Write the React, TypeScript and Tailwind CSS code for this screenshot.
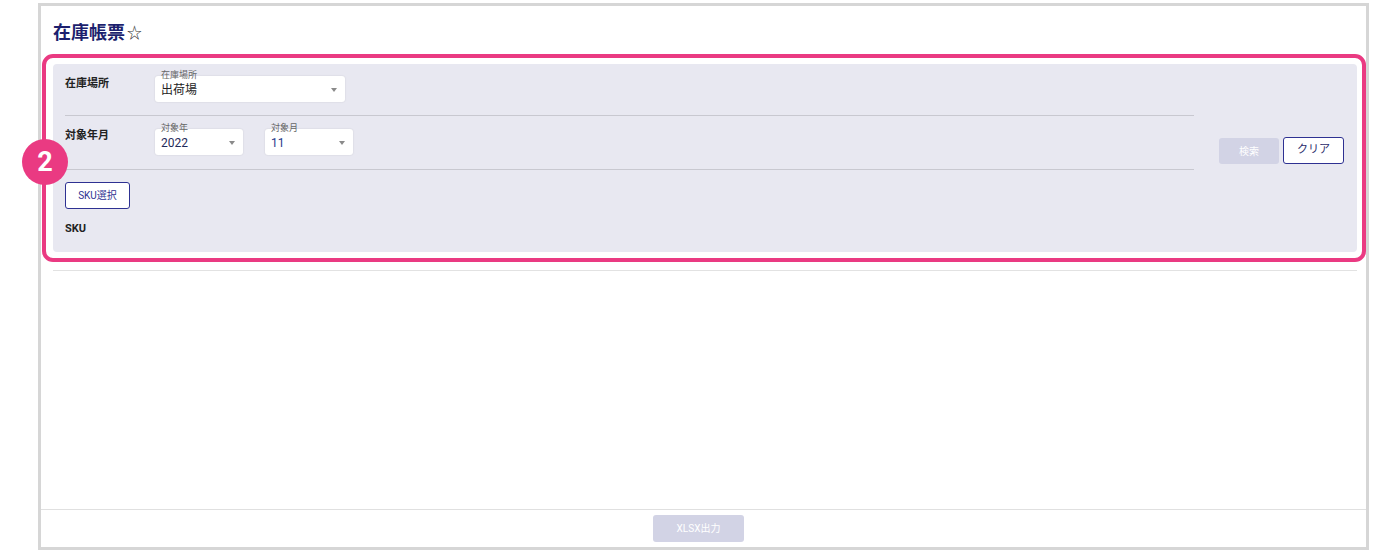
import React from "react";

const font = { fontFamily: "Roboto, 'Noto Sans CJK JP', 'Noto Sans', sans-serif" };

function Select({ label, value, width, valueClass }: { label: string; value: string; width: string; valueClass?: string }) {
  return (
    <div className={`relative h-[26px] ${width} rounded-[3px] bg-white shadow-[0_0_2px_rgba(0,0,0,0.12)]`}>
      <span className="absolute left-[6px] top-[-6px] text-[9px] leading-[11px] text-[#666]">{label}</span>
      <span className={`absolute left-[6px] top-[7px] text-[12px] leading-[14px] ${valueClass ?? "text-[#222]"}`}>{value}</span>
      <span className="absolute right-[8px] top-[12px] h-0 w-0 border-x-[3.5px] border-t-[4px] border-x-transparent border-t-[#8a8a8a]" />
    </div>
  );
}

export default function App() {
  return (
    <div className="h-[554px] w-[1375px] bg-white" style={font}>
      <div className="ml-[38px] mt-[3px] flex h-[547px] w-[1331px] flex-col border-[3px] border-[#d6d6d6] bg-white">
        <div className="flex items-center pl-[12px] pt-[15px] leading-[24px]">
          <span className="text-[18px] font-bold text-[#1c1f6e]">在庫帳票</span>
          <span className="ml-[2px] text-[15px] text-[#333]">☆</span>
        </div>

        <div className="relative ml-[12px] mr-[9px] mt-[19px] h-[188px] rounded-[4px] bg-[#e8e8f1]">
          <div className="flex h-full">
            <div className="w-[1141px] pl-[12px]">
              <div className="flex h-[52px] items-start border-b border-[#c8c8d0] pt-[12px]">
                <div className="w-[90px] pt-[1px] text-[11px] font-bold leading-[14px] text-[#222]">在庫場所</div>
                <Select label="在庫場所" value="出荷場" width="w-[190px]" />
              </div>
              <div className="flex h-[54px] items-start border-b border-[#c8c8d0] pt-[13px]">
                <div className="w-[90px] pt-[0px] text-[11px] font-bold leading-[14px] text-[#222]">対象年月</div>
                <Select label="対象年" value="2022" width="w-[88px]" valueClass="text-[#1f2a5a]" />
                <div className="w-[22px]" />
                <Select label="対象月" value="11" width="w-[88px]" valueClass="text-[#1f3a8a]" />
              </div>
              <div className="pt-[12px]">
                <button className="h-[27px] w-[65px] rounded-[3px] border border-[#2e3192] bg-white text-[10px] text-[#2e3192]">
                  SKU選択
                </button>
                <div className="pt-[13px] text-[11px] font-bold leading-[14px] text-[#222]">SKU</div>
              </div>
            </div>
            <div className="flex items-start gap-[4px] pl-[25px] pt-[73px]">
              <button className="mt-[1px] h-[26px] w-[60px] rounded-[3px] bg-[#d2d3e5] text-[10px] text-white">検索</button>
              <button className="h-[27px] w-[61px] rounded-[3px] border border-[#2e3192] bg-white text-[11px] text-[#2b2b6b]">クリア</button>
            </div>
          </div>
          <div className="pointer-events-none absolute bottom-[-10px] left-[-11px] right-[-9px] top-[-10px] rounded-[11px] border-[4px] border-[#ea3a82]" />
          <div className="absolute left-[-31px] top-[75px] flex h-[46px] w-[46px] items-center justify-center rounded-full bg-[#ea3a82] text-[27px] font-bold leading-none text-white">
            2
          </div>
        </div>

        <div className="ml-[12px] mr-[9px] mt-[18px] border-t border-[#e2e2e2]" />
        <div className="flex-1" />
        <div className="flex h-[38px] justify-center border-t border-[#e0e0e0] pr-[10px] pt-[5px]">
          <button className="h-[27px] w-[91px] rounded-[3px] bg-[#d2d3e5] text-[10px] text-white">XLSX出力</button>
        </div>
      </div>
    </div>
  );
}
